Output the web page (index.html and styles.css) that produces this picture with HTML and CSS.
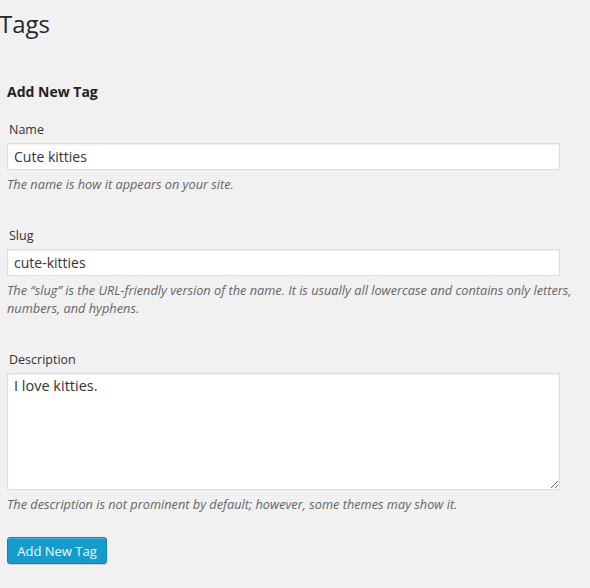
FILE: index.html
```html
<!DOCTYPE html>
<html>
<head>
<meta charset="utf-8">
<link rel="stylesheet" href="styles.css">
</head>
<body>
<div class="wrap">
  <h1 class="title">Tags</h1>
  <form class="form">
    <h3 class="heading">Add New Tag</h3>
    <div class="field field-name">
      <label class="label">Name</label>
      <input class="input" type="text" value="Cute kitties">
      <p class="help">The name is how it appears on your site.</p>
    </div>
    <div class="field field-slug">
      <label class="label">Slug</label>
      <input class="input" type="text" value="cute-kitties">
      <p class="help">The “slug” is the URL-friendly version of the name. It is usually all lowercase and contains only letters, numbers, and hyphens.</p>
    </div>
    <div class="field field-desc">
      <label class="label">Description</label>
      <textarea class="textarea">I love kitties.</textarea>
      <p class="help">The description is not prominent by default; however, some themes may show it.</p>
    </div>
    <div class="actions">
      <button class="button" type="button">Add New Tag</button>
    </div>
  </form>
</div>
</body>
</html>
```
FILE: styles.css
```css
html, body {
  margin: 0;
  padding: 0;
  background: #f1f1f1;
}
body {
  font-family: "Open Sans", "Noto Sans", sans-serif;
  color: #444;
  width: 590px;
  height: 588px;
  overflow: hidden;
}
.wrap {
  display: flex;
  flex-direction: column;
}
.title {
  margin: 8px 0 0 -1px;
  font-size: 24px;
  font-weight: 400;
  line-height: 32px;
  color: #23282d;
}
.form {
  display: flex;
  flex-direction: column;
  padding-left: 7px;
}
.heading {
  margin: 42px 0 0 0;
  font-size: 14px;
  font-weight: 700;
  line-height: 20px;
  color: #222;
}
.field {
  display: flex;
  flex-direction: column;
}
.field-name { margin-top: 19px; }
.field-slug { margin-top: 34px; }
.field-desc { margin-top: 34px; }
.label {
  font-size: 12.5px;
  line-height: 18px;
  padding-left: 2px;
  margin-bottom: 4px;
  color: #333;
}
.input {
  margin: 0;
  width: 553px;
  height: 27px;
  box-sizing: border-box;
  border: 1px solid #ddd;
  box-shadow: inset 0 1px 2px rgba(0,0,0,0.07);
  background: #fff;
  font-family: "Open Sans", "Noto Sans", sans-serif;
  font-size: 14px;
  color: #333;
  padding: 0 6px;
  outline: none;
}
.textarea {
  width: 553px;
  height: 117px;
  box-sizing: border-box;
  border: 1px solid #ddd;
  box-shadow: inset 0 1px 2px rgba(0,0,0,0.07);
  background: #fff;
  font-family: "Open Sans", "Noto Sans", sans-serif;
  font-size: 14.5px;
  line-height: 20px;
  color: #333;
  padding: 2px 6px;
  margin: 0;
  resize: vertical;
  outline: none;
}
.help {
  margin: 5px 0 0 0;
  font-size: 12.75px;
  line-height: 18px;
  font-style: italic;
  color: #666;
  width: 580px;
}
.actions {
  margin-top: 24px;
  display: flex;
}
.button {
  height: 27px;
  width: 100px;
  box-sizing: border-box;
  background: #149dcc;
  border: 1px solid #0f86b3;
  border-radius: 3px;
  box-shadow: inset 0 1px 0 rgba(120,200,230,0.5), 0 1px 0 rgba(0,0,0,0.15);
  color: #f4fafd;
  font-family: "Open Sans", "Noto Sans", sans-serif;
  font-size: 13px;
  padding: 0;
  white-space: nowrap;
  display: flex;
  align-items: center;
  justify-content: center;
}
```
